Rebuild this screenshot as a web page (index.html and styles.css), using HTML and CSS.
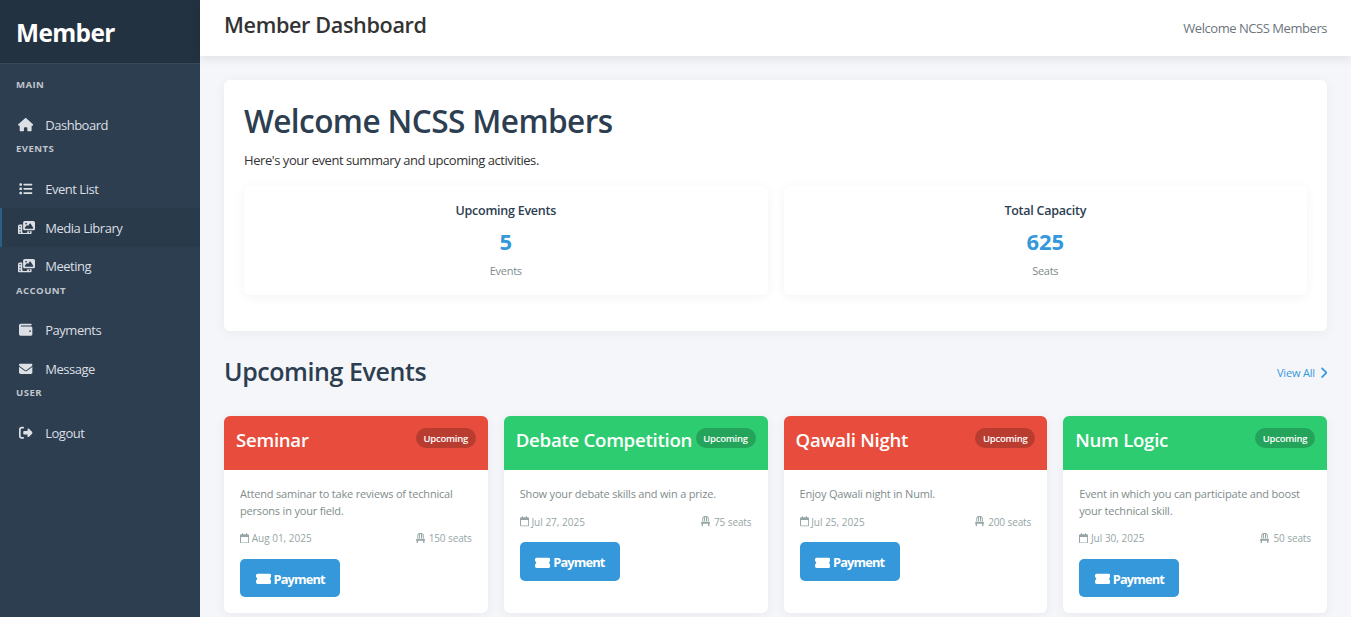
FILE: index.html
```html
<!DOCTYPE html>
<html lang="en">
<head>
<meta charset="utf-8">
<title>Member Dashboard</title>
<link rel="stylesheet" href="styles.css">
</head>
<body>
<svg class="sprite" aria-hidden="true">
  <symbol id="i-house" viewBox="0 0 576 512"><path d="M575.8 255.5c0 18-15 32.1-32 32.1h-32l.7 160.2c0 2.7-.2 5.4-.5 8.1V472c0 22.1-17.9 40-40 40H456c-1.1 0-2.2 0-3.3-.1c-1.4 .1-2.8 .1-4.2 .1H416 392c-22.1 0-40-17.9-40-40V448 384c0-17.7-14.3-32-32-32H256c-17.7 0-32 14.3-32 32v64 24c0 22.1-17.9 40-40 40H160 128.1c-1.5 0-3-.1-4.5-.2c-1.2 .1-2.4 .2-3.6 .2H104c-22.1 0-40-17.9-40-40V360c0-.9 0-1.9 .1-2.8V287.6H32c-18 0-32-14-32-32.1c0-9 3-17 10-24L266.4 8c7-7 15-8 22-8s15 2 21 7L564.8 231.5c8 7 12 15 11 24z"/></symbol>
  <symbol id="i-list" viewBox="0 0 512 512"><path d="M40 48C26.700 48 16 58.700 16 72v48c0 13.300 10.700 24 24 24H88c13.300 0 24-10.700 24-24V72c0-13.300-10.700-24-24-24H40zM192 64c-17.700 0-32 14.300-32 32s14.300 32 32 32H480c17.700 0 32-14.300 32-32s-14.300-32-32-32H192zm0 160c-17.700 0-32 14.300-32 32s14.300 32 32 32H480c17.700 0 32-14.300 32-32s-14.300-32-32-32H192zm0 160c-17.700 0-32 14.300-32 32s14.300 32 32 32H480c17.700 0 32-14.300 32-32s-14.300-32-32-32H192zM16 232v48c0 13.300 10.700 24 24 24H88c13.300 0 24-10.700 24-24V232c0-13.300-10.700-24-24-24H40c-13.300 0-24 10.700-24 24zM40 368c-13.300 0-24 10.700-24 24v48c0 13.300 10.700 24 24 24H88c13.300 0 24-10.700 24-24V392c0-13.300-10.700-24-24-24H40z"/></symbol>
  <symbol id="i-photo" viewBox="0 0 640 512"><path d="M256 0H576c35.300 0 64 28.700 64 64V288c0 35.300-28.700 64-64 64H256c-35.300 0-64-28.700-64-64V64c0-35.300 28.700-64 64-64zM476 106.700C471.500 100 464 96 456 96s-15.500 4-20 10.700l-56 84L362.700 169c-4.600-5.700-11.500-9-18.700-9s-14.200 3.300-18.700 9l-64 80c-5.800 7.200-6.900 17.100-2.900 25.400s12.400 13.600 21.600 13.600h80 48H552c8.900 0 17-4.900 21.200-12.700s3.700-17.300-1.200-24.600l-96-144zM336 96a32 32 0 1 0 -64 0 32 32 0 1 0 64 0zM64 128h96V384v32c0 17.700 14.300 32 32 32H320c17.700 0 32-14.300 32-32V384H512v64c0 35.300-28.700 64-64 64H64c-35.300 0-64-28.700-64-64V192c0-35.300 28.700-64 64-64zm8 64c-8.800 0-16 7.200-16 16v16c0 8.800 7.200 16 16 16H88c8.800 0 16-7.200 16-16V208c0-8.800-7.200-16-16-16H72zm0 104c-8.800 0-16 7.200-16 16v16c0 8.800 7.200 16 16 16H88c8.800 0 16-7.200 16-16V312c0-8.800-7.200-16-16-16H72zm0 104c-8.800 0-16 7.200-16 16v16c0 8.800 7.200 16 16 16H88c8.800 0 16-7.200 16-16V416c0-8.800-7.200-16-16-16H72zm336 16v16c0 8.800 7.200 16 16 16h16c8.800 0 16-7.200 16-16V416c0-8.800-7.200-16-16-16H424c-8.800 0-16 7.200-16 16z"/></symbol>
  <symbol id="i-wallet" viewBox="0 0 512 512"><path d="M64 32C28.700 32 0 60.700 0 96V416c0 35.300 28.700 64 64 64H448c35.300 0 64-28.700 64-64V192c0-35.300-28.700-64-64-64H80c-8.800 0-16-7.200-16-16s7.200-16 16-16H448c17.700 0 32-14.300 32-32s-14.300-32-32-32H64zM416 272a32 32 0 1 1 0 64 32 32 0 1 1 0-64z"/></symbol>
  <symbol id="i-envelope" viewBox="0 0 512 512"><path d="M48 64C21.500 64 0 85.500 0 112c0 15.100 7.100 29.300 19.200 38.400L236.800 313.600c11.400 8.500 27 8.500 38.400 0L492.800 150.400c12.100-9.100 19.200-23.300 19.200-38.400c0-26.500-21.500-48-48-48H48zM0 176V384c0 35.300 28.700 64 64 64H448c35.300 0 64-28.700 64-64V176L294.400 339.200c-22.800 17.100-54 17.100-76.800 0L0 176z"/></symbol>
  <symbol id="i-logout" viewBox="0 0 512 512"><path d="M377.900 105.900L500.700 228.700c7.200 7.200 11.300 17.100 11.300 27.300s-4.100 20.100-11.300 27.300L377.900 406.100c-6.400 6.400-15 9.900-24 9.900c-18.700 0-33.900-15.200-33.900-33.900l0-62.100-128 0c-17.700 0-32-14.300-32-32l0-64c0-17.700 14.300-32 32-32l128 0 0-62.100c0-18.700 15.200-33.900 33.900-33.900c9 0 17.600 3.600 24 9.900zM160 96L96 96c-17.700 0-32 14.300-32 32l0 256c0 17.700 14.300 32 32 32l64 0c17.700 0 32 14.300 32 32s-14.300 32-32 32l-64 0c-53 0-96-43-96-96L0 128C0 75 43 32 96 32l64 0c17.700 0 32 14.300 32 32s-14.300 32-32 32z"/></symbol>
  <symbol id="i-calendar" viewBox="0 0 448 512"><path d="M152 24c0-13.300-10.700-24-24-24s-24 10.700-24 24V64H64C28.700 64 0 92.700 0 128v16 48V448c0 35.300 28.700 64 64 64H384c35.300 0 64-28.700 64-64V192 144 128c0-35.300-28.700-64-64-64H344V24c0-13.300-10.700-24-24-24s-24 10.700-24 24V64H152V24zM48 192H400V448c0 8.800-7.200 16-16 16H64c-8.800 0-16-7.200-16-16V192z"/></symbol>
  <symbol id="i-chair" viewBox="0 0 448 512"><path d="M248 48V256h48V58.700c23.900 13.800 40 39.700 40 69.300V256h48V128C384 57.300 326.700 0 256 0H192C121.300 0 64 57.300 64 128V256h48V128c0-29.600 16.100-55.500 40-69.300V256h48V48h48zM48 288c-12.100 0-23.200 6.800-28.600 17.700l-16 32c-5 9.900-4.400 21.700 1.400 31.100S20.900 384 32 384l0 96c0 17.700 14.300 32 32 32s32-14.300 32-32V384H352v96c0 17.700 14.300 32 32 32s32-14.300 32-32V384c11.100 0 21.400-5.700 27.200-15.200s6.400-21.200 1.400-31.100l-16-32C423.200 294.800 412.100 288 400 288H48z"/></symbol>
  <symbol id="i-ticket" viewBox="0 0 576 512"><path d="M64 64C28.700 64 0 92.700 0 128v64c0 8.800 7.400 15.700 15.700 18.600C34.500 217.100 48 235 48 256s-13.500 38.900-32.300 45.400C7.400 304.300 0 311.200 0 320v64c0 35.300 28.700 64 64 64H512c35.300 0 64-28.700 64-64V320c0-8.800-7.400-15.700-15.700-18.600C541.500 294.900 528 277 528 256s13.500-38.900 32.300-45.400c8.300-2.900 15.700-9.800 15.700-18.600V128c0-35.300-28.700-64-64-64H64z"/></symbol>
  <symbol id="i-chevron" viewBox="0 0 320 512"><path d="M310.600 233.400c12.500 12.500 12.500 32.800 0 45.300l-192 192c-12.500 12.500-32.800 12.500-45.300 0s-12.500-32.800 0-45.300L242.700 256 73.400 86.600c-12.500-12.500-12.500-32.800 0-45.300s32.800-12.500 45.300 0l192 192z"/></symbol>
</svg>
<div class="layout">
  <aside class="sidebar">
    <div class="brand">Member</div>
    <nav class="nav">
      <h3 class="nav-label">MAIN</h3>
      <a class="nav-link"><span class="nav-icon"><svg class="fa w576"><use href="#i-house"/></svg></span><span>Dashboard</span></a>
      <h3 class="nav-label">EVENTS</h3>
      <a class="nav-link"><span class="nav-icon"><svg class="fa"><use href="#i-list"/></svg></span><span>Event List</span></a>
      <a class="nav-link active"><span class="nav-icon"><svg class="fa w640"><use href="#i-photo"/></svg></span><span>Media Library</span></a>
      <a class="nav-link"><span class="nav-icon"><svg class="fa w640"><use href="#i-photo"/></svg></span><span>Meeting</span></a>
      <h3 class="nav-label">ACCOUNT</h3>
      <a class="nav-link"><span class="nav-icon"><svg class="fa"><use href="#i-wallet"/></svg></span><span>Payments</span></a>
      <a class="nav-link"><span class="nav-icon"><svg class="fa"><use href="#i-envelope"/></svg></span><span>Message</span></a>
      <h3 class="nav-label">USER</h3>
      <a class="nav-link"><span class="nav-icon"><svg class="fa"><use href="#i-logout"/></svg></span><span>Logout</span></a>
    </nav>
  </aside>
  <div class="main">
    <header class="topbar">
      <h1 class="page-title">Member Dashboard</h1>
      <span class="user">Welcome NCSS Members</span>
    </header>
    <main class="content">
      <section class="welcome">
        <h2 class="welcome-title">Welcome NCSS Members</h2>
        <p class="welcome-text">Here's your event summary and upcoming activities.</p>
        <div class="stats">
          <div class="stat"><h3 class="stat-title">Upcoming Events</h3><div class="stat-value">5</div><div class="stat-unit">Events</div></div>
          <div class="stat"><h3 class="stat-title">Total Capacity</h3><div class="stat-value">625</div><div class="stat-unit">Seats</div></div>
        </div>
      </section>
      <div class="section-head">
        <h2 class="section-title">Upcoming Events</h2>
        <a class="view-all"><span>View All</span><svg class="fa w320"><use href="#i-chevron"/></svg></a>
      </div>
      <div class="cards">
        <article class="card">
          <div class="card-head red"><h3 class="card-title">Seminar</h3><span class="badge">Upcoming</span></div>
          <div class="card-body">
            <p class="desc">Attend saminar to take reviews of technical<br>persons in your field.</p>
            <div class="meta"><span class="meta-item"><svg class="fa w448"><use href="#i-calendar"/></svg>Aug 01, 2025</span><span class="meta-item seats"><svg class="fa w448"><use href="#i-chair"/></svg>150 seats</span></div>
            <a class="btn"><svg class="fa w576"><use href="#i-ticket"/></svg><span>Payment</span></a>
          </div>
        </article>
        <article class="card">
          <div class="card-head green"><h3 class="card-title">Debate Competition</h3><span class="badge">Upcoming</span></div>
          <div class="card-body">
            <p class="desc">Show your debate skills and win a prize.</p>
            <div class="meta"><span class="meta-item"><svg class="fa w448"><use href="#i-calendar"/></svg>Jul 27, 2025</span><span class="meta-item seats"><svg class="fa w448"><use href="#i-chair"/></svg>75 seats</span></div>
            <a class="btn"><svg class="fa w576"><use href="#i-ticket"/></svg><span>Payment</span></a>
          </div>
        </article>
        <article class="card">
          <div class="card-head red"><h3 class="card-title">Qawali Night</h3><span class="badge">Upcoming</span></div>
          <div class="card-body">
            <p class="desc">Enjoy Qawali night in Numl.</p>
            <div class="meta"><span class="meta-item"><svg class="fa w448"><use href="#i-calendar"/></svg>Jul 25, 2025</span><span class="meta-item seats"><svg class="fa w448"><use href="#i-chair"/></svg>200 seats</span></div>
            <a class="btn"><svg class="fa w576"><use href="#i-ticket"/></svg><span>Payment</span></a>
          </div>
        </article>
        <article class="card">
          <div class="card-head green"><h3 class="card-title">Num Logic</h3><span class="badge">Upcoming</span></div>
          <div class="card-body">
            <p class="desc">Event in which you can participate and boost<br>your technical skill.</p>
            <div class="meta"><span class="meta-item"><svg class="fa w448"><use href="#i-calendar"/></svg>Jul 30, 2025</span><span class="meta-item seats"><svg class="fa w448"><use href="#i-chair"/></svg>50 seats</span></div>
            <a class="btn"><svg class="fa w576"><use href="#i-ticket"/></svg><span>Payment</span></a>
          </div>
        </article>
      </div>
    </main>
  </div>
</div>
</body>
</html>
```
FILE: styles.css
```css
* { box-sizing: border-box; margin: 0; padding: 0; }
body {
  font-family: "Segoe UI", "Open Sans", "Noto Sans", sans-serif;
  font-size: 13px;
  background: #f5f6fa;
  color: #333;
  height: 617px;
  overflow: hidden;
}
.sprite { display: none; }
.fa { width: 1em; height: 1em; fill: currentColor; flex: none; display: block; }
.w320 { width: .625em; }
.w448 { width: .875em; }
.w576 { width: 1.125em; }
.w640 { width: 1.25em; }

.layout { display: flex; height: 617px; }
.sidebar { width: 200px; flex: none; background: #2c3e50; color: #dcdfe3; }
.brand {
  height: 64px;
  padding-left: 16px;
  line-height: 65px;
  font-size: 24.4px;
  font-weight: 700;
  letter-spacing: -.6px;
  color: #fff;
  background: #233240;
  border-bottom: 1px solid #38495a;
}
.nav { padding-top: 16.4px; }
.nav-label {
  height: 25.4px;
  padding-left: 16px;
  line-height: 10.4px;
  font-size: 9.6px;
  font-weight: 700;
  letter-spacing: .42px;
  color: #c0c5cb;
}
.nav-link {
  display: flex;
  align-items: center;
  gap: 9.2px;
  height: 38.6px;
  padding-left: 14px;
  border-left: 2px solid transparent;
  letter-spacing: -.47px;
}
.nav-link.active { background: #293a4a; border-left-color: #2b5f86; }
.nav-icon { width: 20px; display: flex; justify-content: center; font-size: 13.6px; }

.main { flex: 1; min-width: 0; display: flex; flex-direction: column; }
.topbar {
  height: 56px;
  flex: none;
  display: flex;
  justify-content: space-between;
  padding: 0 24px;
  background: #fff;
  box-shadow: 0 2px 10px rgba(0, 0, 0, .1);
}
.page-title { font-size: 21.6px; font-weight: 600; line-height: 49px; letter-spacing: -.35px; }
.user { line-height: 57px; color: #6c757d; letter-spacing: -.45px; }
.content { padding: 24px; }

.welcome {
  height: 251px;
  padding: 20px;
  background: #fff;
  border-radius: 6px;
  box-shadow: 0 2px 12px rgba(0, 0, 0, .05);
}
.welcome-title { font-size: 31.6px; font-weight: 600; line-height: 42px; letter-spacing: -.6px; color: #2c3e50; }
.welcome-text { margin-top: 8px; line-height: 20px; letter-spacing: -.44px; }
.stats { display: grid; grid-template-columns: 1fr 1fr; gap: 16px; margin-top: 16px; }
.stat {
  height: 109px;
  padding-top: 16px;
  text-align: center;
  background: #fff;
  border-radius: 6px;
  box-shadow: 0 2px 12px rgba(0, 0, 0, .05);
}
.stat-title { font-size: 12.5px; line-height: 18px; font-weight: 600; letter-spacing: -.25px; color: #2c3e50; }
.stat-value { margin-top: 5px; font-size: 22px; line-height: 32px; font-weight: 700; color: #3498db; }
.stat-unit { margin-top: 5px; font-size: 11px; line-height: 18px; letter-spacing: -.25px; color: #7f8c8d; }

.section-head { display: flex; justify-content: space-between; align-items: center; height: 36px; margin-top: 23px; }
.section-title { padding-bottom: 2px; font-size: 25px; font-weight: 600; line-height: 34px; letter-spacing: -.42px; color: #2c3e50; }
.view-all { display: flex; align-items: center; gap: 5px; padding-top: 1px; font-size: 11px; letter-spacing: -.2px; color: #3498db; }
.view-all .fa { margin-top: 1px; stroke: currentColor; stroke-width: 20px; font-size: 11.5px; }

.cards { display: grid; grid-template-columns: repeat(4, 1fr); gap: 16px; margin-top: 26px; }
.card {
  height: 197px;
  overflow: hidden;
  background: #fff;
  border-radius: 6px;
  box-shadow: 0 2px 12px rgba(0, 0, 0, .05);
}
.card-head { display: flex; justify-content: space-between; align-items: flex-start; height: 54px; padding: 12px; color: #fff; }
.red { background: #e74c3c; }
.green { background: #2ecc71; }
.card-title { font-size: 18.6px; font-weight: 600; line-height: 23.6px; letter-spacing: -.26px; white-space: nowrap; }
.badge {
  width: 60px;
  height: 20px;
  flex: none;
  line-height: 21px;
  text-align: center;
  font-size: 9.5px;
  font-weight: 600;
  letter-spacing: -.25px;
  background: rgba(0, 0, 0, .2);
  border-radius: 10px;
}
.card-body { padding: 16px; }
.desc { font-size: 11px; line-height: 16.6px; letter-spacing: -.19px; color: #7f8c8d; white-space: nowrap; }
.meta { display: flex; justify-content: space-between; margin-top: 11px; font-size: 10px; line-height: 16px; color: #95a5a6; }
.meta-item { display: flex; align-items: center; gap: 2.6px; }
.meta .fa { font-size: 10.4px; }
.seats { gap: 4px; letter-spacing: -.1px; }
.btn {
  display: flex;
  align-items: center;
  gap: 2.6px;
  width: 100px;
  height: 38.4px;
  margin-top: 12.7px;
  padding: 2px 0 0 15.6px;
  font-size: 12.8px;
  font-weight: 700;
  letter-spacing: -.85px;
  color: #fff;
  background: #3498db;
  border-radius: 5px;
}
.btn .fa { font-size: 13.6px; }
```
